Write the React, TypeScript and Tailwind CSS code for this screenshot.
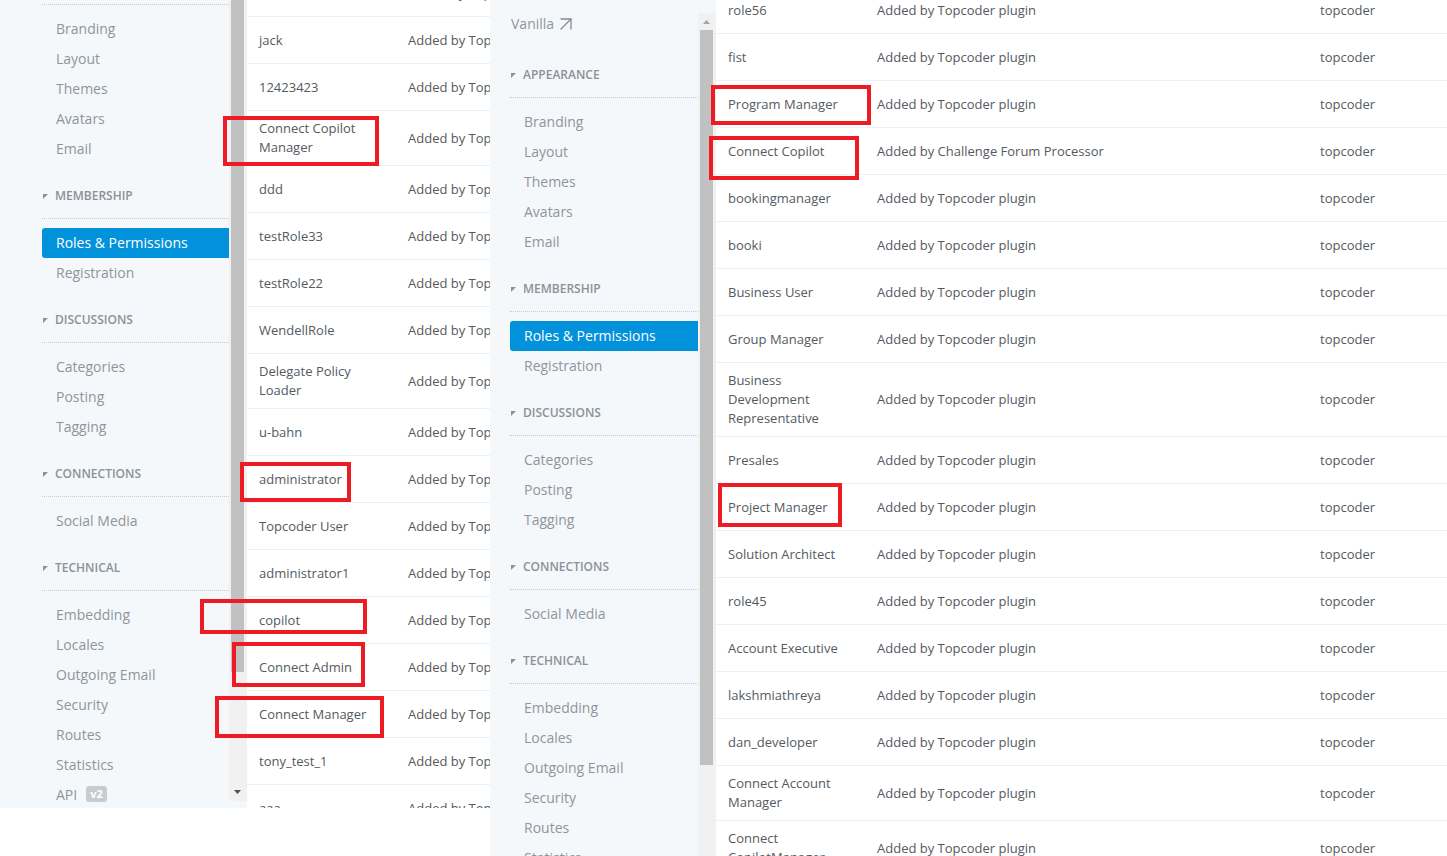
import { ArrowUpRight } from "lucide-react";

const SECTIONS = [
  { title: "Appearance", items: ["Branding", "Layout", "Themes", "Avatars", "Email"] },
  { title: "Membership", items: ["Roles & Permissions", "Registration"] },
  { title: "Discussions", items: ["Categories", "Posting", "Tagging"] },
  { title: "Connections", items: ["Social Media"] },
  { title: "Technical", items: ["Embedding", "Locales", "Outgoing Email", "Security", "Routes", "Statistics", "API"] },
];

const TP = "Added by Topcoder plugin";

const LEFT_ROWS: [string, string][] = [
  ["Tester", TP],
  ["jack", TP],
  ["12423423", TP],
  ["Connect Copilot Manager", TP],
  ["ddd", TP],
  ["testRole33", TP],
  ["testRole22", TP],
  ["WendellRole", TP],
  ["Delegate Policy Loader", TP],
  ["u-bahn", TP],
  ["administrator", TP],
  ["Topcoder User", TP],
  ["administrator1", TP],
  ["copilot", TP],
  ["Connect Admin", TP],
  ["Connect Manager", TP],
  ["tony_test_1", TP],
  ["aaa", TP],
];

const RIGHT_ROWS: [string, string][] = [
  ["role56", TP],
  ["fist", TP],
  ["Program Manager", TP],
  ["Connect Copilot", "Added by Challenge Forum Processor"],
  ["bookingmanager", TP],
  ["booki", TP],
  ["Business User", TP],
  ["Group Manager", TP],
  ["Business Development Representative", TP],
  ["Presales", TP],
  ["Project Manager", TP],
  ["Solution Architect", TP],
  ["role45", TP],
  ["Account Executive", TP],
  ["lakshmiathreya", TP],
  ["dan_developer", TP],
  ["Connect Account Manager", TP],
  ["Connect CopilotManager", TP],
];

// red annotation boxes drawn over the screenshot
const MARKS = [
  "left-[223px] top-[116px] w-[156px] h-[50px]",
  "left-[240px] top-[462px] w-[111px] h-[40px]",
  "left-[200px] top-[599px] w-[167px] h-[35px]",
  "left-[232px] top-[642px] w-[133px] h-[45px]",
  "left-[215px] top-[696px] w-[169px] h-[42px]",
  "left-[711px] top-[85px] w-[160px] h-[40px]",
  "left-[709px] top-[136px] w-[150px] h-[44px]",
  "left-[718px] top-[483px] w-[124px] h-[44px]",
];

function Sidebar() {
  return (
    <div>
      <div className="h-[43px] pt-[15px] pl-px flex items-start text-[14px] leading-[18px] text-[#8f959c]">
        Vanilla
        <ArrowUpRight className="w-[24px] h-[24px] -mt-[3px] -mb-[3px] text-[#858b93]" strokeWidth={1.3} />
      </div>
      {SECTIONS.map((s) => (
        <div key={s.title}>
          <div className="h-[55px] pt-[23px] border-b border-dotted border-[#c9cdd3] flex items-start">
            <svg viewBox="0 0 5 5" className="w-[5px] h-[5px] ml-px mt-[7px] shrink-0">
              <polygon points="0,0 5,0 0,5" fill="#8c9198" />
            </svg>
            <span className="ml-[7px] text-[12px] leading-[18px] font-semibold uppercase text-[#8c9198]">{s.title}</span>
          </div>
          <div className="pt-[9px]">
            {s.items.map((it) => {
              const active = it === "Roles & Permissions";
              return (
                <div
                  key={it}
                  className={`h-[30px] pb-[2px] flex items-center pl-[14px] text-[14px] rounded-l-[3px] ${
                    active ? "bg-[#0291db] text-white" : "text-[#8f959c]"
                  }`}
                >
                  {it}
                  {it === "API" && (
                    <span className="ml-[9px] px-[4px] h-[16px] leading-[16px] rounded-[3px] bg-[#c8ccd1] text-white text-[11px] font-bold">
                      v2
                    </span>
                  )}
                </div>
              );
            })}
          </div>
        </div>
      ))}
    </div>
  );
}

function RoleTable({ rows }: { rows: [string, string][] }) {
  return (
    <div>
      {rows.map(([name, desc], i) => (
        <div key={i} className="flex items-center min-h-[47px] border-b border-[#edf0f5] text-[13px] leading-[19px] text-[#545a61]">
          <div className="w-[149px] shrink-0 px-[12px] py-[8px]">{name}</div>
          <div className="w-[443px] shrink-0 pl-[12px] whitespace-nowrap">{desc}</div>
          <div className="pl-[12px] whitespace-nowrap">topcoder</div>
        </div>
      ))}
    </div>
  );
}

function ArrowDown() {
  return (
    <svg viewBox="0 0 7 4" className="w-[7px] h-[4px]">
      <polygon points="0,0 7,0 3.5,4" fill="#505050" />
    </svg>
  );
}

function ArrowUp() {
  return (
    <svg viewBox="0 0 7 4" className="w-[7px] h-[4px]">
      <polygon points="0,4 7,4 3.5,0" fill="#a3a3a3" />
    </svg>
  );
}

export default function App() {
  return (
    <div className="relative w-[1447px] h-[856px] overflow-hidden bg-white flex font-['Open_Sans',sans-serif]">
      {/* left capture, scrolled further down */}
      <div className="w-[490px] h-[808px] shrink-0 flex overflow-hidden bg-[#f5f8fb]">
        <div className="w-[229px] shrink-0 pl-[42px] overflow-hidden">
          <div className="-mt-[93px]">
            <Sidebar />
          </div>
        </div>
        <div className="w-[18px] shrink-0 flex flex-col">
          <div className="bg-[#f1f1f1] h-[801px] flex flex-col">
            <div className="ml-[2px] w-[13px] h-[672px] bg-[#c1c1c1]" />
            <div className="flex-1 flex items-end justify-start pl-[5px] pb-[7px]">
              <ArrowDown />
            </div>
          </div>
        </div>
        <div className="flex-1 bg-white overflow-hidden">
          <div className="-mt-[30px]">
            <RoleTable rows={LEFT_ROWS} />
          </div>
        </div>
      </div>

      {/* right capture */}
      <div className="flex-1 h-[856px] flex bg-[#f5f8fb]">
        <div className="w-[208px] shrink-0 pl-[20px] overflow-hidden">
          <Sidebar />
        </div>
        <div className="w-[18px] shrink-0 flex flex-col">
          <div className="h-[13px]" />
          <div className="flex-1 bg-[#f1f1f1] flex flex-col">
            <div className="h-[17px] flex items-center pl-[5px]">
              <ArrowUp />
            </div>
            <div className="ml-[2px] w-[13px] h-[735px] bg-[#c1c1c1]" />
          </div>
        </div>
        <div className="flex-1 bg-white overflow-hidden">
          <div className="-mt-[13px]">
            <RoleTable rows={RIGHT_ROWS} />
          </div>
        </div>
      </div>

      {MARKS.map((m) => (
        <div key={m} className={`absolute border-[4px] border-[#ed1c24] ${m}`} />
      ))}
    </div>
  );
}
